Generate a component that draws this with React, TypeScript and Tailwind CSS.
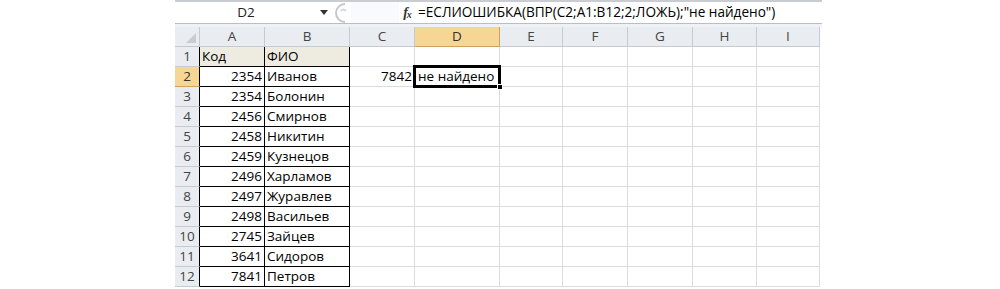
import React from 'react';

const font = { fontFamily: '"Open Sans", "Liberation Sans", sans-serif' };

const cols = ['A', 'B', 'C', 'D', 'E', 'F', 'G', 'H', 'I'];

const data: [string, string][] = [
  ['2354', 'Иванов'],
  ['2354', 'Болонин'],
  ['2456', 'Смирнов'],
  ['2458', 'Никитин'],
  ['2459', 'Кузнецов'],
  ['2496', 'Харламов'],
  ['2497', 'Журавлев'],
  ['2498', 'Васильев'],
  ['2745', 'Зайцев'],
  ['3641', 'Сидоров'],
  ['7841', 'Петров'],
];

const grid = 'grid grid-cols-[25px_65px_85px_65px_85px_63px_65px_65px_64px_63px]';

function Cell({
  children,
  right,
  table,
  className = '',
}: {
  children?: React.ReactNode;
  right?: boolean;
  table?: boolean;
  className?: string;
}) {
  return (
    <div
      className={`h-[20px] border-r border-b px-[2px] pt-[1px] flex items-center text-[13.5px] text-black leading-none whitespace-nowrap overflow-visible ${
        right ? 'justify-end' : 'justify-start'
      } ${table ? 'border-black' : 'border-[#dadcdd]'} ${className}`}
    >
      {children}
    </div>
  );
}

function RowHeader({ n, active }: { n: number; active?: boolean }) {
  return (
    <div
      className={`h-[20px] border-b border-r pt-[1px] flex items-center justify-center text-[13.5px] leading-none ${
        active
          ? 'bg-[#f6d692] border-b-[#c9a45a] border-r-black text-[#333]'
          : 'bg-[#e9ecf0] border-b-[#c6cbd2] border-r-black text-[#444]'
      }`}
    >
      {n}
    </div>
  );
}

export default function App() {
  return (
    <div className="w-[1000px] h-[289px] bg-white overflow-hidden" style={font}>
      <div className="ml-[175px] w-[647px]">
        {/* Formula bar */}
        <div className="h-[23px] border-t-2 border-[#c9cdd2] flex items-center bg-white">
          <div className="w-[142px] h-full flex items-center justify-center text-[13.5px] text-[#222]">D2</div>
          <div className="w-[14px] flex items-center justify-center">
            <svg width="8" height="5" viewBox="0 0 8 5">
              <path d="M0 0 H8 L4 5 Z" fill="#333" />
            </svg>
          </div>
          <div className="w-[20px] h-full flex items-center justify-center">
            <svg width="16" height="20" viewBox="0 0 16 20">
              <path d="M12 1 A9 9 0 0 0 12 19" fill="none" stroke="#c4c8cc" strokeWidth="2" />
              <path d="M8 8 Q10 5 13 8" fill="none" stroke="#d5d8dc" strokeWidth="2" />
            </svg>
          </div>
          <div className="w-[48px] h-full bg-[#f9fafb]" />
          <div
            className="w-[17px] h-full flex items-center justify-center text-[14px] italic font-bold text-[#333]"
            style={{ fontFamily: '"Liberation Serif", serif' }}
          >
            f<span className="text-[10px] -ml-[1px] mt-[4px]">x</span>
          </div>
          <div className="flex-1 h-full flex items-center pl-[2px] text-[13.6px] text-black whitespace-nowrap">
            =ЕСЛИОШИБКА(ВПР(C2;A1:B12;2;ЛОЖЬ);"не найдено")
          </div>
        </div>
        <div className="h-[4px] border-t border-[#b9bec5] bg-[#eef1f5]" />

        {/* Column headers */}
        <div className={grid}>
          <div className="h-[20px] bg-[#e9ecf0] border-r border-b border-[#c6cbd2] flex items-end justify-end p-[3px]">
            <svg width="10" height="10" viewBox="0 0 10 10">
              <path d="M10 0 V10 H0 Z" fill="#c9cdd2" />
            </svg>
          </div>
          {cols.map((c) => (
            <div
              key={c}
              className={`h-[20px] border-r border-b pt-[1px] flex items-center justify-center text-[13.5px] leading-none ${
                c === 'D'
                  ? 'bg-[#f6d692] border-[#c9a45a] text-[#333]'
                  : 'bg-[#e9ecf0] border-[#c6cbd2] text-[#444]'
              }`}
            >
              {c}
            </div>
          ))}
        </div>

        {/* Row 1 */}
        <div className={grid}>
          <RowHeader n={1} />
          <Cell table className="bg-[#eeece1]">Код</Cell>
          <Cell table className="bg-[#eeece1]">ФИО</Cell>
          <Cell />
          <Cell />
          <Cell />
          <Cell />
          <Cell />
          <Cell />
          <Cell />
        </div>

        {data.map(([code, name], i) => (
          <div className={grid} key={code + name}>
            <RowHeader n={i + 2} active={i === 0} />
            <Cell table right>
              {code}
            </Cell>
            <Cell table>{name}</Cell>
            {i === 0 ? (
              <>
                <Cell right>7842</Cell>
                <div className="relative h-[20px] border-r border-b border-[#dadcdd] flex items-center px-[3px] pt-[1px] text-[13.5px] leading-none whitespace-nowrap">
                  не найдено
                  <div className="absolute -left-[2px] -top-[2px] w-[88px] h-[23px] border-[3px] border-black pointer-events-none" />
                  <div className="absolute -right-[4px] -bottom-[4px] w-[6px] h-[6px] bg-black border border-white" />
                </div>
              </>
            ) : (
              <>
                <Cell />
                <Cell />
              </>
            )}
            <Cell />
            <Cell />
            <Cell />
            <Cell />
            <Cell />
          </div>
        ))}
      </div>
    </div>
  );
}
